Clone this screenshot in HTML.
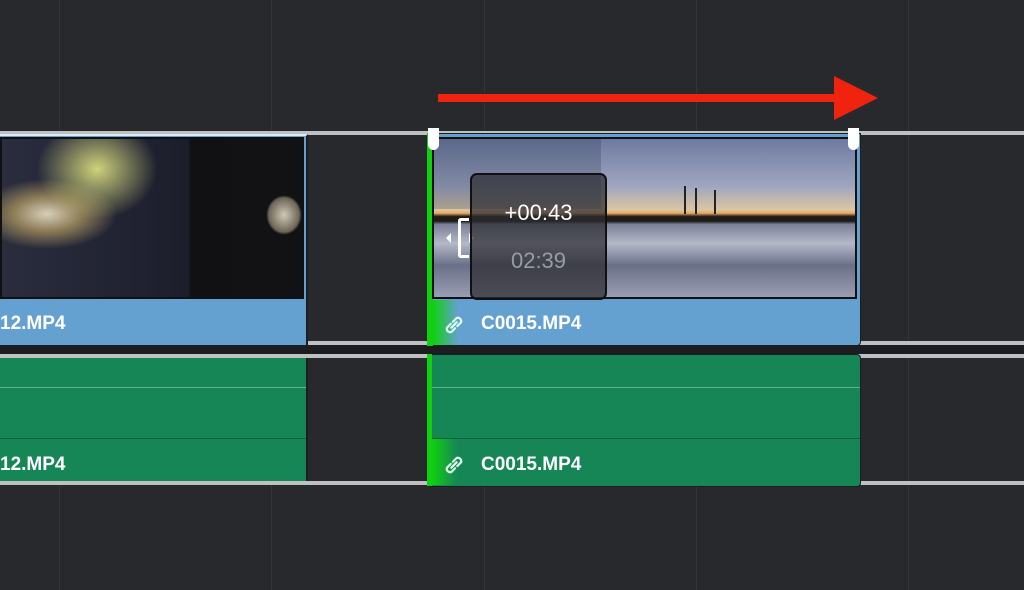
<!DOCTYPE html>
<html><head><style>
body{margin:0;width:1024px;height:590px;background:#28292d;position:relative;overflow:hidden;font-family:"Liberation Sans",sans-serif}
div{position:absolute;box-sizing:border-box}
.v{top:0;width:1px;height:590px;background:#34353a}
.lbl{color:#fff;font-weight:bold;font-size:19px}
</style></head><body>
<div class="v" style="left:59px"></div><div class="v" style="left:271px"></div><div class="v" style="left:484px"></div><div class="v" style="left:696px"></div><div class="v" style="left:908px"></div>
<div style="left:0;top:131px;width:1024px;height:4px;background:#bfc0c2"></div>
<div style="left:0;top:341px;width:1024px;height:4px;background:#bfc0c2"></div>
<div style="left:0;top:345px;width:1024px;height:9px;background:#1c1d20"></div>
<div style="left:0;top:354px;width:1024px;height:4px;background:#bfc0c2"></div>
<div style="left:0;top:481px;width:1024px;height:4px;background:#bfc0c2"></div>
<div style="left:0;top:135px;width:1024px;height:206px;background:#28292d"></div>
<div style="left:0;top:358px;width:1024px;height:123px;background:#28292d"></div>
<div class="v" style="left:59px;top:135px;height:206px"></div><div class="v" style="left:271px;top:135px;height:206px"></div><div class="v" style="left:908px;top:135px;height:206px"></div>
<div class="v" style="left:59px;top:358px;height:123px"></div><div class="v" style="left:271px;top:358px;height:123px"></div><div class="v" style="left:908px;top:358px;height:123px"></div>
<!-- clip1 video -->
<div style="left:0;top:134px;width:308px;height:211px;background:#64a0d0;border-right:2px solid #1c1d20;border-top:2px solid #dce9f4"></div>
<div style="left:0;top:137px;width:304px;height:162px;border:2px solid #111;background:radial-gradient(ellipse 60px 50px at 95px 30px,#cfd27a,transparent),radial-gradient(ellipse 70px 35px at 45px 75px,#d8d0b8 0%,#8a7a55 50%,transparent 100%),linear-gradient(90deg,#2a2d3e 0,#1c1e2c 62%,#111114 63%,#121214 100%)"></div>
<div style="left:266px;top:195px;width:36px;height:40px;border-radius:50%;background:radial-gradient(#cfc9b5,#6d6658 60%,transparent 70%)"></div>
<div class="lbl" style="left:0;top:313px">12.MP4</div>
<!-- clip1 audio -->
<div style="left:0;top:358px;width:308px;height:123px;background:#178657;border-right:2px solid #1c1d20"></div>
<div style="left:0;top:387px;width:306px;height:1px;background:#6aae8e"></div>
<div style="left:0;top:438px;width:306px;height:1px;background:#0f5e3c"></div>
<div class="lbl" style="left:0;top:454px">12.MP4</div>
<!-- clip2 video -->
<div style="left:427px;top:133px;width:434px;height:213px;background:#64a0d0;border:1px solid #1c1d20;border-radius:0 0 4px 4px"></div>
<div style="left:427px;top:133px;width:6px;height:213px;background:#10d010"></div>
<div style="left:433px;top:300px;width:25px;height:45px;background:linear-gradient(90deg,#10d010,#64a0d0)"></div>
<div style="left:432px;top:137px;width:425px;height:162px;border:2px solid #111;background:linear-gradient(180deg,#6d7aa0 0%,#a0a6c0 30%,#dcc6a2 45%,#e8a860 47%,#1f1d18 49%,#1b1a16 52%,#7a8098 54%,#b4b8c8 66%,#6a7088 80%,#9a9eb2 100%)"></div>
<div style="left:434px;top:139px;width:167px;height:70px;background:rgba(40,50,80,0.25)"></div>
<div style="left:684px;top:186px;width:2px;height:28px;background:#222"></div><div style="left:695px;top:188px;width:2px;height:26px;background:#222"></div><div style="left:714px;top:190px;width:2px;height:24px;background:#222"></div>
<div style="left:428px;top:128px;width:11px;height:22px;background:#fff;border-radius:0 0 6px 6px"></div>
<div style="left:848px;top:128px;width:11px;height:22px;background:#fff;border-radius:0 0 6px 6px"></div>
<svg style="position:absolute;left:442px;top:313px" width="24" height="24" viewBox="0 0 22 22"><g fill="none" stroke="#dfe" stroke-width="2" stroke-linecap="round"><path d="M8.5 13.5 L13.5 8.5"/><path d="M8 10 L4.5 13.5 A3.2 3.2 0 0 0 8.5 17.5 L12 14"/><path d="M10 8 L13.5 4.5 A3.2 3.2 0 0 1 17.5 8.5 L14 12"/></g></svg>
<div class="lbl" style="left:481px;top:313px">C0015.MP4</div>
<!-- trim handle -->
<div style="left:458px;top:218px;width:11px;height:40px;border:3px solid #fff;border-right:none;border-radius:3px 0 0 3px"></div>
<svg style="position:absolute;left:445px;top:229px" width="30" height="18"><path d="M1 9 L6 4 L6 14Z M29 9 L24 4 L24 14Z" fill="#fff"/></svg>
<!-- tooltip -->
<div style="left:470px;top:173px;width:137px;height:127px;background:rgba(45,45,50,0.72);border:2px solid #111;border-radius:7px"></div>
<div style="left:470px;top:200px;width:137px;text-align:center;color:#fff;font-size:22px">+00:43</div>
<div style="left:470px;top:248px;width:137px;text-align:center;color:#9a9ca4;font-size:22px">02:39</div>
<!-- clip2 audio -->
<div style="left:427px;top:354px;width:434px;height:133px;background:#178657;border:1px solid #1c1d20;border-radius:4px"></div>
<div style="left:432px;top:387px;width:428px;height:1px;background:#6aae8e"></div>
<div style="left:432px;top:438px;width:428px;height:1px;background:#0f5e3c"></div>
<div style="left:427px;top:354px;width:5px;height:132px;background:#10d010"></div>
<div style="left:432px;top:439px;width:25px;height:46px;background:linear-gradient(90deg,#10d010,#178657)"></div>
<svg style="position:absolute;left:442px;top:453px" width="24" height="24" viewBox="0 0 22 22"><g fill="none" stroke="#dfe" stroke-width="2" stroke-linecap="round"><path d="M8.5 13.5 L13.5 8.5"/><path d="M8 10 L4.5 13.5 A3.2 3.2 0 0 0 8.5 17.5 L12 14"/><path d="M10 8 L13.5 4.5 A3.2 3.2 0 0 1 17.5 8.5 L14 12"/></g></svg>
<div class="lbl" style="left:481px;top:454px">C0015.MP4</div>
<!-- arrow -->
<svg style="position:absolute;left:430px;top:70px" width="460" height="60"><path d="M8 24 L406 24 L406 32 L8 32Z" fill="#f0230f"/><path d="M404 6 L448 28 L404 50Z" fill="#f0230f"/></svg>
</body></html>
